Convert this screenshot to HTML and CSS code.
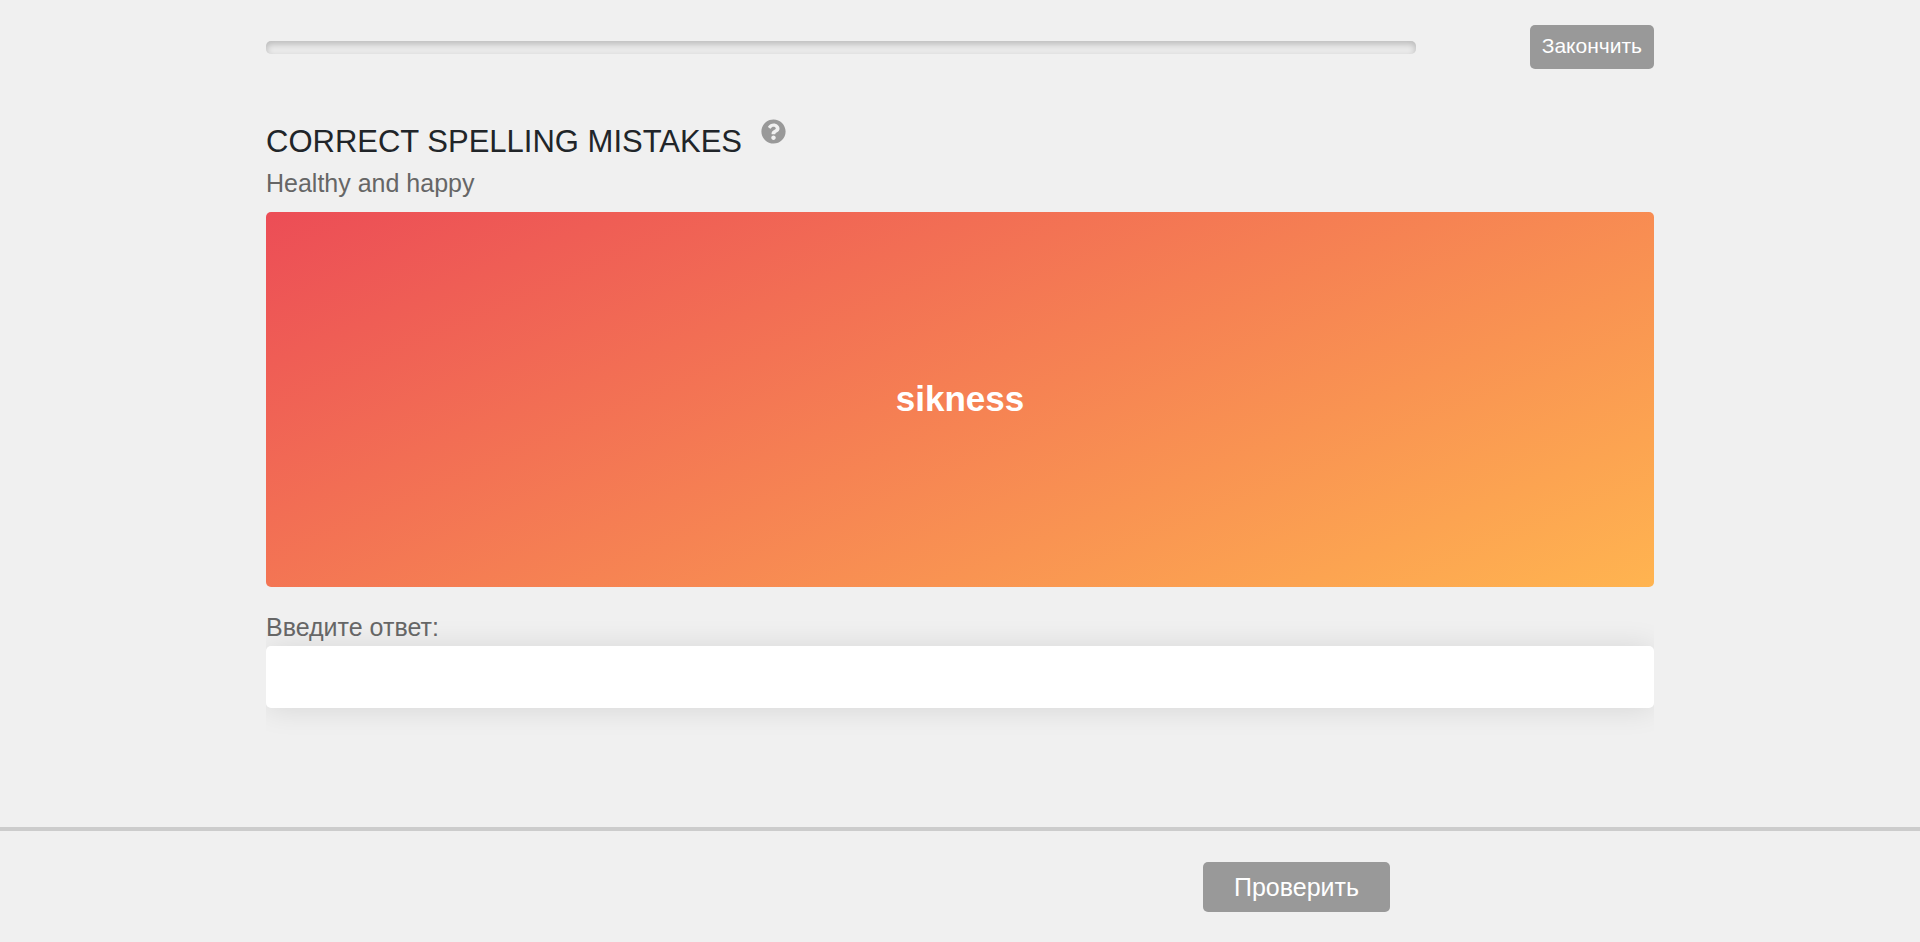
FILE: index.html
```html
<!DOCTYPE html>
<html lang="ru">
<head>
<meta charset="utf-8">
<title>Correct spelling mistakes</title>
<link rel="stylesheet" href="styles.css">
</head>
<body>
<header class="topbar container">
  <div class="progress" role="progressbar" aria-label="Прогресс" aria-valuemin="0" aria-valuemax="100" aria-valuenow="0"></div>
  <button class="btn btn-finish" type="button">Закончить</button>
</header>
<main class="task container">
  <div class="heading">
    <h1 class="title">CORRECT SPELLING MISTAKES</h1>
    <button class="help" type="button" aria-label="Помощь">
      <svg class="help-icon" viewBox="0 0 512 512" aria-hidden="true"><path fill="currentColor" d="M504 256c0 136.997-111.043 248-248 248S8 392.997 8 256C8 119.083 119.043 8 256 8s248 111.083 248 248zM262.655 90c-54.497 0-89.255 22.957-116.549 63.758-3.536 5.286-2.353 12.415 2.715 16.258l34.699 26.31c5.205 3.947 12.621 3.008 16.665-2.122 17.864-22.658 30.113-35.797 57.303-35.797 20.429 0 45.698 13.148 45.698 32.958 0 14.976-12.363 22.667-32.534 33.976C247.128 238.528 216 254.941 216 296v4c0 6.627 5.373 12 12 12h56c6.627 0 12-5.373 12-12v-1.333c0-28.462 83.186-29.647 83.186-106.667 0-58.002-60.165-102-116.531-102zM256 338c-25.365 0-46 20.635-46 46 0 25.364 20.635 46 46 46s46-20.636 46-46c0-25.365-20.635-46-46-46z"/></svg>
    </button>
  </div>
  <p class="subtitle">Healthy and happy</p>
  <section class="card"><p class="word">sikness</p></section>
  <form class="answer">
    <label class="answer-label" for="answer">Введите ответ:</label>
    <input class="answer-input" id="answer" type="text" autocomplete="off">
  </form>
</main>
<footer class="footer">
  <div class="container footer-inner">
    <button class="btn btn-check" type="button">Проверить</button>
  </div>
</footer>
</body>
</html>
```
FILE: styles.css
```css
* { box-sizing: border-box; }

body {
  display: flex;
  flex-direction: column;
  min-height: 100vh;
  margin: 0;
  background: #f0f0f0;
  color: #212529;
  font-family: "Liberation Sans", Arial, sans-serif;
}

.container {
  width: calc(100% - 32px);
  max-width: 1388px;
  margin: 0 auto;
}

.topbar {
  display: flex;
  align-items: center;
  justify-content: space-between;
  gap: 16px;
  padding: 25px 0 0;
}

.progress {
  flex: 0 1 1150px;
  height: 13px;
  margin-top: 1px;
  border-radius: 5px;
  background: #ececec;
  box-shadow: inset 0 3px 7px rgba(0, 0, 0, 0.22);
}

.btn {
  border: 0;
  border-radius: 5px;
  background: #999;
  color: #fff;
  font-family: inherit;
  cursor: pointer;
}

.btn-finish {
  height: 44px;
  padding: 0 12px 2px;
  font-size: 21px;
}

.task { flex: 1; padding-top: 50px; }

.heading { display: flex; align-items: flex-start; gap: 19px; }

.title {
  margin: 0;
  padding-top: 5px;
  font-size: 31px;
  font-weight: 400;
  line-height: 36px;
}

.help {
  display: block;
  padding: 0;
  border: 0;
  background: none;
  color: #999;
  cursor: pointer;
}

.help-icon { display: block; width: 25px; height: 25px; }

.subtitle {
  margin: 7px 0 13px;
  color: #666;
  font-size: 25px;
  line-height: 32px;
}

.card {
  display: flex;
  align-items: center;
  justify-content: center;
  min-height: 375px;
  padding-bottom: 2px;
  border-radius: 5px;
  background: linear-gradient(157deg, #ec4d56, #ffb450);
}

.word {
  margin: 0;
  color: #fff;
  font-size: 35px;
  font-weight: 700;
  line-height: 40px;
}

.answer { padding: 24px 0; overflow-x: clip; }

.answer-label {
  display: block;
  padding-bottom: 2px;
  color: #666;
  font-size: 25px;
  line-height: 33px;
}

.answer-input {
  display: block;
  width: 100%;
  height: 62px;
  padding: 0 16px;
  border: 0;
  border-radius: 5px;
  outline: 0;
  background: #fff;
  box-shadow: 0 1px 30px rgba(0, 0, 0, 0.11);
  font: inherit;
  font-size: 25px;
}

.footer { border-top: 4px solid #ccc; }

.footer-inner {
  display: flex;
  justify-content: flex-end;
  padding: 31px 264px 30px 0;
}

.btn-check {
  height: 50px;
  padding: 0 31px;
  font-size: 25px;
}
```
